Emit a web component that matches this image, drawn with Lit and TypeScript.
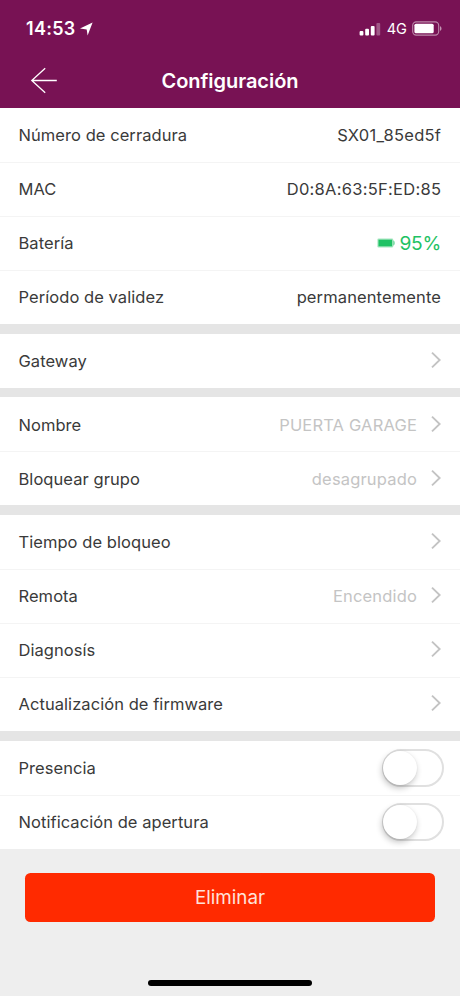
import { LitElement, html, css, svg, nothing } from "lit";
import { customElement, property } from "lit/decorators.js";

interface Row {
  label: string;
  value?: string;
  tone?: "code" | "dark" | "muted" | "battery";
  kind: "info" | "link" | "switch";
}

const GROUPS: Row[][] = [
  [
    { label: "Número de cerradura", value: "SX01_85ed5f", tone: "code", kind: "info" },
    { label: "MAC", value: "D0:8A:63:5F:ED:85", tone: "code", kind: "info" },
    { label: "Batería", value: "95%", tone: "battery", kind: "info" },
    { label: "Período de validez", value: "permanentemente", tone: "dark", kind: "info" },
  ],
  [{ label: "Gateway", kind: "link" }],
  [
    { label: "Nombre", value: "PUERTA GARAGE", tone: "muted", kind: "link" },
    { label: "Bloquear grupo", value: "desagrupado", tone: "muted", kind: "link" },
  ],
  [
    { label: "Tiempo de bloqueo", kind: "link" },
    { label: "Remota", value: "Encendido", tone: "muted", kind: "link" },
    { label: "Diagnosís", kind: "link" },
    { label: "Actualización de firmware", kind: "link" },
  ],
  [
    { label: "Presencia", kind: "switch" },
    { label: "Notificación de apertura", kind: "switch" },
  ],
];

@customElement("settings-row")
export class SettingsRow extends LitElement {
  @property({ attribute: false }) row!: Row;

  static styles = css`
    :host {
      display: flex;
      align-items: center;
      height: 54px;
      box-sizing: border-box;
      padding: 0.8px 19px 0 18.5px;
      color: #3a3a3a;
      font-size: 16.5px;
      line-height: 20px;
      letter-spacing: 0.06px;
      white-space: nowrap;
    }
    .label { flex: 1; }
    .dark { letter-spacing: 0.12px; }
    .code { letter-spacing: 0.27px; margin-right: -0.25px; }
    .muted { color: #c4c4c4; letter-spacing: 0.17px; }
    .battery {
      display: flex;
      align-items: center;
      gap: 4px;
      color: #1fc264;
      font-size: 19.2px;
      letter-spacing: -0.3px;
    }
    .cell { display: block; margin-top: -1px; }
    .chevron { display: block; margin: -2px 0 0 14px; }
    .switch {
      width: 62px;
      height: 38px;
      box-sizing: border-box;
      border: 2px solid #e0e0e0;
      border-radius: 19px;
      margin-right: -2.5px;
      margin-top: -1px;
      background: #fff;
    }
    .knob {
      width: 34px;
      height: 34px;
      margin-left: -0.5px;
      border-radius: 50%;
      background: #fff;
      box-shadow: -1px 3px 6px rgba(0, 0, 0, 0.24), 0 0 2px rgba(0, 0, 0, 0.06);
    }
  `;

  render() {
    const r = this.row;
    return html`
      <span class="label">${r.label}</span>
      ${r.value
        ? html`<span class=${r.tone ?? "dark"}>
            ${r.tone === "battery"
              ? svg`<svg class="cell" width="18" height="10" viewBox="0 0 18 10">
                  <rect x="0.4" y="0.6" width="15.8" height="8.8" rx="1.2" fill="#a5e6c0" />
                  <rect x="1.5" y="1.7" width="13.6" height="6.6" fill="#1fc264" />
                  <path d="M16.2 2.2C18.2 3 18.2 7 16.2 7.8Z" fill="#6dd69a" />
                </svg>`
              : nothing}<span>${r.value}</span></span>`
        : nothing}
      ${r.kind === "link"
        ? svg`<svg class="chevron" width="10" height="18" viewBox="0 0 10 18" fill="none" stroke="#c3c3c3" stroke-width="1.9">
            <path d="M1 1.6L8.7 9L1 16.4" />
          </svg>`
        : nothing}
      ${r.kind === "switch" ? html`<div class="switch"><div class="knob"></div></div>` : nothing}
    `;
  }
}

@customElement("app-root")
export class AppRoot extends LitElement {
  static styles = css`
    :host {
      display: flex;
      flex-direction: column;
      height: 996px;
      background: #eee;
      font-family: Inter, "Liberation Sans", sans-serif;
      overflow: hidden;
    }
    .header {
      height: 108px;
      flex: none;
      background: #781254;
      color: #fff;
      box-sizing: border-box;
    }
    .status {
      display: flex;
      align-items: center;
      height: 57px;
      padding: 0 18px 0 26px;
    }
    .time { font-size: 18px; font-weight: 600; letter-spacing: 0.3px; }
    .locate { margin-left: 4px; }
    .signal { margin-left: auto; }
    .network { font-size: 14.6px; margin: 0 5px 0 6px; }
    .nav {
      display: grid;
      grid-template-columns: 60px 1fr 60px;
      align-items: center;
      height: 48px;
    }
    .back { margin-left: 30px; margin-top: -1px; }
    .title { text-align: center; font-size: 20px; font-weight: 600; letter-spacing: -0.05px; }
    .groups {
      display: flex;
      flex-direction: column;
      gap: 9.7px;
      background: #e5e5e5;
    }
    .group { background: #fff; }
    .group settings-row + settings-row { box-shadow: inset 0 1px #f4f4f4; }
    .remove {
      flex: none;
      height: 49px;
      margin: 24.4px 25px 0;
      padding: 0;
      border: 0;
      border-radius: 5.5px;
      background: #ff2a00;
      color: #ffe3da;
      font: 18.8px Inter, "Liberation Sans", sans-serif;
    }
    .home {
      width: 164px;
      height: 6px;
      border-radius: 3px;
      background: #000;
      margin: auto auto 10.5px;
    }
  `;

  render() {
    return html`
      <header class="header">
        <div class="status">
          <span class="time">14:53</span>
          <svg class="locate" width="13" height="14" viewBox="0 0 13 14" fill="#fff">
            <path d="M12.6 0.4L7.6 13.6L6.7 7.4L0 6.6Z" />
          </svg>
          <svg class="signal" width="22" height="14" viewBox="0 0 22 14" fill="#fff">
            <rect x="0.6" y="9" width="3.8" height="4.6" rx="1" />
            <rect x="6.2" y="6.7" width="3.8" height="6.9" rx="1" />
            <rect x="11.8" y="4" width="3.8" height="9.6" rx="1" />
            <rect x="17.4" y="1" width="3.8" height="12.6" rx="1" opacity="0.3" />
          </svg>
          <span class="network">4G</span>
          <svg width="30" height="15" viewBox="0 0 30 15">
            <rect x="0.7" y="0.9" width="26" height="13.2" rx="3.6" fill="none" stroke="#fff" stroke-opacity="0.5" stroke-width="1.1" />
            <rect x="2.4" y="2.7" width="19.3" height="9.6" rx="1.6" fill="#fff" />
            <path d="M28 5.2C30 5.8 30 9.2 28 9.8Z" fill="#fff" opacity="0.55" />
          </svg>
        </div>
        <div class="nav">
          <svg class="back" width="28" height="27" viewBox="0 0 28 27" fill="none" stroke="#fff" stroke-width="1.3">
            <path d="M26.8 13.5H1.8M15.2 1.2L1.8 13.5L15.2 25.8" />
          </svg>
          <span class="title">Configuración</span>
        </div>
      </header>
      <main class="groups">
        ${GROUPS.map(
          (rows) => html`<section class="group">
            ${rows.map((row) => html`<settings-row .row=${row}></settings-row>`)}
          </section>`
        )}
      </main>
      <button class="remove">Eliminar</button>
      <div class="home"></div>
    `;
  }
}
